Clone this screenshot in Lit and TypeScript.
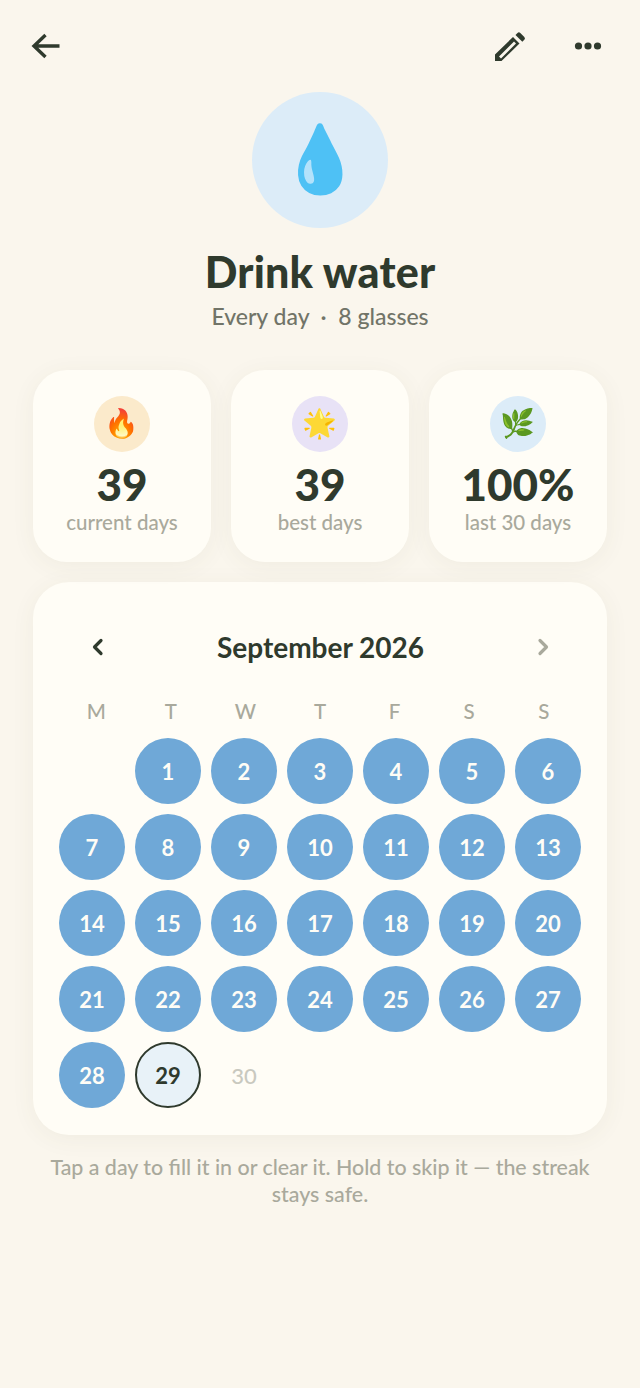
import { LitElement, html, css } from "lit";
import { customElement } from "lit/decorators.js";

const WEEK = ["M", "T", "W", "T", "F", "S", "S"];
const DAYS = Array.from({ length: 30 }, (_, i) => i + 1);

@customElement("app-root")
export class AppRoot extends LitElement {
  static styles = css`
    :host { display: block; width: 640px; min-height: 1388px; background: #faf6ed; font-family: "Lato", "Noto Sans", sans-serif; color: #2f3a2d; overflow: hidden; }
    .nav { display: flex; align-items: center; justify-content: space-between; padding: 24px 38px 0 26px; height: 68px; box-sizing: border-box; }
    .nav svg { display: block; }
    .nav-right { display: flex; align-items: center; gap: 46px; }
    .hero { margin: 24px auto 0; width: 136px; height: 136px; border-radius: 50%; background: #dcecf8; display: flex; align-items: center; justify-content: center; }
    .emoji { font-family: "Noto Color Emoji", sans-serif; line-height: 1; }
    .drop { font-size: 66px; }
    .small { font-size: 28px; }
    h1 { margin: 20px 0 0; text-align: center; font-size: 43px; line-height: 48px; font-weight: 900; letter-spacing: 0.2px; }
    .sub { margin-top: 5px; text-align: center; font-size: 23px; line-height: 30px; font-weight: 500; color: #717468; white-space: pre; }
    .stats { display: grid; grid-template-columns: repeat(3, 178px); gap: 20px; margin: 39px 33px 0; }
    .stat { background: #fffdf6; border-radius: 34px; height: 192px; box-sizing: border-box; padding-top: 26px; display: flex; flex-direction: column; align-items: center; box-shadow: 0 4px 24px rgba(90, 80, 50, 0.06); }
    .ic { width: 56px; height: 56px; border-radius: 50%; display: flex; align-items: center; justify-content: center; }
    .ic-a { background: #fbeacb; } .ic-b { background: #e8e2f6; } .ic-c { background: #dcecf8; }
    .num { margin-top: 6px; font-size: 44px; line-height: 52px; font-weight: 900; }
    .lbl { font-size: 20.5px; line-height: 24px; font-weight: 500; color: #a9a99c; }
    .cal { margin: 20px 33px 0; background: #fffdf6; border-radius: 36px; padding: 42px 26px 27px; box-shadow: 0 4px 24px rgba(90, 80, 50, 0.06); }
    .cal-head { display: flex; align-items: center; justify-content: space-between; padding: 0 29px 0 30px; height: 46px; }
    .month { font-size: 28px; font-weight: 700; line-height: 44px; }
    .week { display: grid; grid-template-columns: repeat(7, 1fr); margin-top: 28px; text-align: center; font-size: 20.5px; line-height: 26px; font-weight: 500; color: #a9a99c; }
    .days { display: grid; grid-template-columns: repeat(7, 66px); gap: 10px; margin-top: 14px; }
    .d { width: 66px; height: 66px; border-radius: 50%; box-sizing: border-box; display: flex; align-items: center; justify-content: center; font-size: 22px; font-weight: 700; }
    .done { background: #6fa8d7; color: #fffdf6; }
    .today { background: #e8f2f8; border: 2.8px solid #2f3a2d; color: #2f3a2d; }
    .future { color: #c9c9bf; font-weight: 500; }
    .hint { margin: 19px 40px 0; text-align: center; font-size: 21.4px; line-height: 26.5px; font-weight: 500; color: #a9a99c; }
  `;

  private day(n: number) {
    const cls = n < 29 ? "d done" : n === 29 ? "d today" : "d future";
    return html`<div class=${cls}>${n}</div>`;
  }

  render() {
    return html`
      <div class="nav">
        <svg width="40" height="40" viewBox="0 0 40 40" fill="none" stroke="#2f3a2d" stroke-width="3.4"><path d="M33.500 20H9M19.500 9 8 20l11.500 11"/></svg>
        <div class="nav-right">
          <svg width="36" height="36" viewBox="0 0 36 36" fill="#2f3a2d"><path fill-rule="evenodd" d="M3 33v-6.500L21 9l6.500 6.500L9.500 33zM7 28.500l2 2L24 15.500l-2-2z"/><path d="M23.500 7l2-2a2 2 0 0 1 2.800 0l4 4a2 2 0 0 1 0 2.800l-2 2z"/></svg>
          <svg width="28" height="10" viewBox="0 0 28 10" fill="#2f3a2d"><circle cx="4.500" cy="5" r="3.600"/><circle cx="14" cy="5" r="3.600"/><circle cx="23.500" cy="5" r="3.600"/></svg>
        </div>
      </div>
      <div class="hero"><span class="emoji drop">💧</span></div>
      <h1>Drink water</h1>
      <div class="sub">Every day  ·  8 glasses</div>
      <div class="stats">
        <div class="stat"><div class="ic ic-a"><span class="emoji small">🔥</span></div><div class="num">39</div><div class="lbl">current days</div></div>
        <div class="stat"><div class="ic ic-b"><span class="emoji small">🌟</span></div><div class="num">39</div><div class="lbl">best days</div></div>
        <div class="stat"><div class="ic ic-c"><span class="emoji small">🌿</span></div><div class="num">100%</div><div class="lbl">last 30 days</div></div>
      </div>
      <div class="cal">
        <div class="cal-head">
          <svg width="18" height="20" viewBox="0 0 18 20" fill="none" stroke="#2f3a2d" stroke-width="3.200" stroke-linecap="round" stroke-linejoin="round"><path d="M12 3.500 5.500 10l6.500 6.500"/></svg>
          <div class="month">September 2026</div>
          <svg width="18" height="20" viewBox="0 0 18 20" fill="none" stroke="#a9a99c" stroke-width="3.200" stroke-linecap="round" stroke-linejoin="round"><path d="M6 3.500 12.500 10 6 16.500"/></svg>
        </div>
        <div class="week">${WEEK.map((w) => html`<div>${w}</div>`)}</div>
        <div class="days"><div></div>${DAYS.map((n) => this.day(n))}</div>
      </div>
      <div class="hint">Tap a day to fill it in or clear it. Hold to skip it — the streak stays safe.</div>
    `;
  }
}
